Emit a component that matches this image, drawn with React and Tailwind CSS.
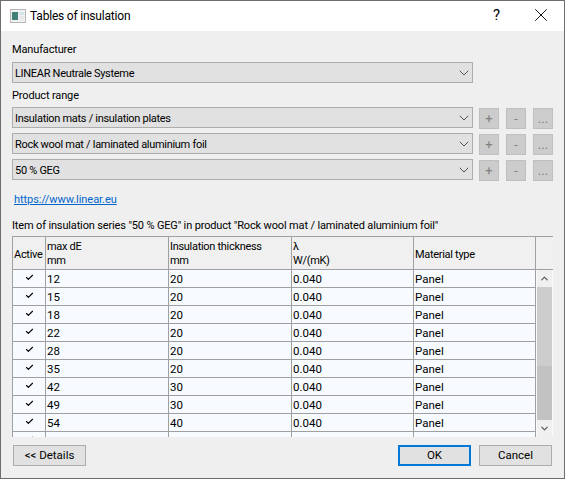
import { ChevronDown, ChevronUp, Check, X } from 'lucide-react'

const rows = [
  ['12', '20'],
  ['15', '20'],
  ['18', '20'],
  ['22', '20'],
  ['28', '20'],
  ['35', '20'],
  ['42', '30'],
  ['49', '30'],
  ['54', '40'],
]

const Combo = ({ label }) => (
  <div className="flex h-[21px] w-[461px] items-center justify-between border border-[#adadad] bg-[#e1e1e1] pl-[2px]">
    <span className="pt-[1px] text-[11px] leading-none tracking-[-0.3px] text-black">{label}</span>
    <ChevronDown size={16} strokeWidth={1.1} className="text-[#222]" />
  </div>
)

const ToolButton = ({ label }) => (
  <div className="flex h-[21px] w-[20px] items-center justify-center border border-[#bfbfbf] bg-[#cccccc] text-[13px] leading-none text-[#808080]">
    {label}
  </div>
)

const ComboRow = ({ label }) => (
  <div className="flex h-[21px] items-start">
    <Combo label={label} />
    <div className="ml-[6px] mt-[1px] flex gap-[7px]">
      <ToolButton label="+" />
      <ToolButton label="-" />
      <ToolButton label="..." />
    </div>
  </div>
)

const HeaderCell = ({ className, children }) => (
  <div className={`flex flex-col justify-center border-r border-[#a0a0a0] pl-[1px] text-[11px] leading-[14px] tracking-[-0.3px] text-black ${className}`}>
    {children}
  </div>
)

const Row = ({ dE, thickness }) => (
  <div className="flex h-[18px] shrink-0 border-b border-[#a0a0a0] bg-[#f7fbff] text-[11.5px] leading-[18px] text-black">
    <div className="flex w-[33px] items-start justify-center border-r border-[#a0a0a0] pt-[3px]">
      <Check size={9} strokeWidth={3} className="text-black" />
    </div>
    <div className="w-[123px] border-r border-[#a0a0a0] pl-[1px]">{dE}</div>
    <div className="w-[123px] border-r border-[#a0a0a0] pl-[1px]">{thickness}</div>
    <div className="w-[122px] border-r border-[#a0a0a0] pl-[1px]">0.040</div>
    <div className="w-[122px] border-r border-[#a0a0a0] pl-[1px]">Panel</div>
  </div>
)

export default function App() {
  return (
    <div
      className="flex h-[479px] w-[565px] flex-col border border-[#6e6e6e] bg-[#efefef]"
      style={{ fontFamily: 'Roboto, "Noto Sans", sans-serif' }}
    >
      <div className="flex h-[30px] shrink-0 items-center bg-white pl-[9px]">
        <svg width="16" height="14" viewBox="0 0 16 14" className="mr-[4px]">
          <rect x="0.5" y="0.5" width="15" height="13" fill="#f2f2f2" stroke="#b5b5b5" />
          <rect x="2" y="3" width="6" height="8" fill="#3f7f78" />
          <rect x="9" y="3" width="5" height="3" fill="#d5e6ea" />
          <rect x="9" y="7" width="5" height="4" fill="#e8e8e8" />
        </svg>
        <span className="text-[12px] tracking-[-0.2px] text-black">Tables of insulation</span>
        <span className="mb-[2px] ml-auto mr-[30px] text-[15px] leading-none text-black">?</span>
        <X size={22} strokeWidth={1} className="mb-[2px] mr-[12px] text-black" />
      </div>

      <div className="flex min-h-0 flex-1 flex-col px-[11px]">
        <div className="mt-[11px] text-[11px] leading-[16px] tracking-[-0.15px] text-black">Manufacturer</div>
        <div className="mt-[4px]">
          <Combo label="LINEAR Neutrale Systeme" />
        </div>
        <div className="mt-[5px] text-[11px] leading-[16px] tracking-[-0.15px] text-black">Product range</div>
        <div className="mt-[3px] flex flex-col gap-[5px]">
          <ComboRow label="Insulation mats / insulation plates" />
          <ComboRow label="Rock wool mat / laminated aluminium foil" />
          <ComboRow label="50 % GEG" />
        </div>
        <a className="ml-[2px] mt-[12px] text-[11px] leading-[16px] tracking-[-0.05px] text-[#0066cc] underline">https://www.linear.eu</a>
        <div className="mt-[10px] text-[11px] leading-[16px] tracking-[-0.15px] text-black">
          Item of insulation series "50 % GEG" in product "Rock wool mat / laminated aluminium foil"
        </div>

        <div className="mt-[2px] h-[201px] w-[541px] overflow-hidden border-l border-t border-[#a0a0a0] bg-[#f7fbff]">
          <div className="flex h-[33px] border-b border-[#a0a0a0] bg-[#f0f0f0]">
            <HeaderCell className="w-[33px] pt-[3px]">Active</HeaderCell>
            <HeaderCell className="w-[123px] pt-[2px]">
              <span>max dE</span>
              <span>mm</span>
            </HeaderCell>
            <HeaderCell className="w-[123px] pt-[2px]">
              <span>Insulation thickness</span>
              <span>mm</span>
            </HeaderCell>
            <HeaderCell className="w-[122px] pt-[2px]">
              <span>λ</span>
              <span>W/(mK)</span>
            </HeaderCell>
            <HeaderCell className="w-[122px] pt-[3px]">Material type</HeaderCell>
          </div>
          <div className="flex h-[167px]">
            <div className="flex w-[523px] flex-col overflow-hidden">
              {rows.map((r) => (
                <Row key={r[0]} dE={r[0]} thickness={r[1]} />
              ))}
              <Row dE="64" thickness="40" />
            </div>
            <div className="ml-[1px] flex w-[15px] flex-col bg-[#f0f0f0]">
              <div className="flex h-[17px] items-center justify-center">
                <ChevronUp size={11} strokeWidth={2.5} className="text-[#555]" />
              </div>
              <div className="h-[79px] bg-[#cdcdcd]" />
              <div className="h-[54px] bg-[#c2c2c2]" />
              <div className="flex h-[17px] items-center justify-center">
                <ChevronDown size={11} strokeWidth={2.5} className="text-[#555]" />
              </div>
            </div>
          </div>
        </div>

        <div className="mt-[8px] flex items-start px-[1px]">
          <div className="flex h-[21px] w-[73px] items-center justify-center border border-[#adadad] bg-[#e1e1e1] text-[11.5px] leading-none text-black">
            {'<< Details'}
          </div>
          <div className="ml-auto flex h-[21px] w-[73px] items-center justify-center border-2 border-[#0078d7] bg-[#e1e1e1] text-[11.5px] leading-none text-black">
            OK
          </div>
          <div className="ml-[8px] flex h-[21px] w-[73px] items-center justify-center border border-[#adadad] bg-[#e1e1e1] text-[11.5px] leading-none text-black">
            Cancel
          </div>
        </div>
      </div>
    </div>
  )
}
